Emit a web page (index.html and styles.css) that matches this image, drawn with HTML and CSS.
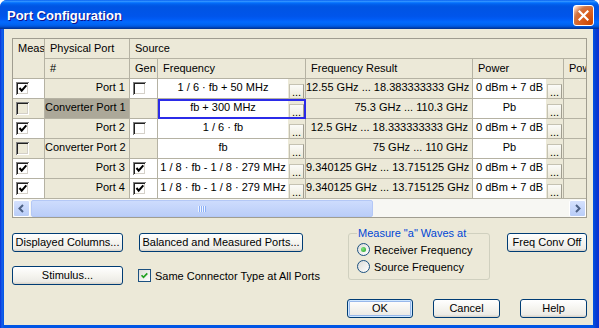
FILE: index.html
```html
<!DOCTYPE html>
<html>
<head>
	<meta charset="utf-8">
	<title>Port Configuration</title>
	<link rel="stylesheet" href="styles.css">
</head>
<body>
	<div class="window">
		<div class="titlebar">
			<span class="title">Port Configuration</span>
			<span class="close">
				<svg width="11" height="11" viewBox="0 0 11 11"><path d="M1.5 1.5l8 8M9.5 1.5l-8 8" stroke="#fff" stroke-width="2.2" stroke-linecap="square"/></svg>
			</span>
		</div>
		<div class="client">
			<div class="grid">
				<div class="sheet">
					<div class="hd meas">Meas</div>
					<div class="hd">Physical Port</div>
					<div class="hd source">Source</div>
					<div class="hd">#</div>
					<div class="hd">Gen</div>
					<div class="hd">Frequency</div>
					<div class="hd">Frequency Result</div>
					<div class="hd">Power</div>
					<div class="hd last">Pow</div>

					<div class="cell pick"><span class="cb"><svg viewBox="0 0 13 13"><path d="M3.5 6l2.2 2.6 4.6-5.2"/></svg></span></div>
					<div class="cell port">Port 1</div>
					<div class="cell pick"><span class="cb"></span></div>
					<div class="cell edit"><span class="val">1 / 6 · fb + 50 MHz</span><span class="more"><span class="dots">...</span></span></div>
					<div class="cell result">12.55 GHz ... 18.383333333 GHz</div>
					<div class="cell edit"><span class="val">0 dBm + 7 dB</span><span class="more"><span class="dots">...</span></span></div>
					<div class="cell blank last"></div>

					<div class="cell pick off"><span class="cb"></span></div>
					<div class="cell port sel">Converter Port 1</div>
					<div class="cell blank"></div>
					<div class="cell edit focus"><span class="val">fb + 300 MHz</span><span class="more"><span class="dots">...</span></span></div>
					<div class="cell result">75.3 GHz ... 110.3 GHz</div>
					<div class="cell edit"><span class="val">Pb</span><span class="more"><span class="dots">...</span></span></div>
					<div class="cell blank last"></div>

					<div class="cell pick"><span class="cb"><svg viewBox="0 0 13 13"><path d="M3.5 6l2.2 2.6 4.6-5.2"/></svg></span></div>
					<div class="cell port">Port 2</div>
					<div class="cell pick"><span class="cb"></span></div>
					<div class="cell edit"><span class="val">1 / 6 · fb</span><span class="more"><span class="dots">...</span></span></div>
					<div class="cell result">12.5 GHz ... 18.333333333 GHz</div>
					<div class="cell edit"><span class="val">0 dBm + 7 dB</span><span class="more"><span class="dots">...</span></span></div>
					<div class="cell blank last"></div>

					<div class="cell pick off"><span class="cb"></span></div>
					<div class="cell port">Converter Port 2</div>
					<div class="cell blank"></div>
					<div class="cell edit"><span class="val">fb</span><span class="more"><span class="dots">...</span></span></div>
					<div class="cell result">75 GHz ... 110 GHz</div>
					<div class="cell edit"><span class="val">Pb</span><span class="more"><span class="dots">...</span></span></div>
					<div class="cell blank last"></div>

					<div class="cell pick"><span class="cb"><svg viewBox="0 0 13 13"><path d="M3.5 6l2.2 2.6 4.6-5.2"/></svg></span></div>
					<div class="cell port">Port 3</div>
					<div class="cell pick"><span class="cb"><svg viewBox="0 0 13 13"><path d="M3.5 6l2.2 2.6 4.6-5.2"/></svg></span></div>
					<div class="cell edit"><span class="val">1 / 8 · fb - 1 / 8 · 279 MHz</span><span class="more"><span class="dots">...</span></span></div>
					<div class="cell result">9.340125 GHz ... 13.715125 GHz</div>
					<div class="cell edit"><span class="val">0 dBm + 7 dB</span><span class="more"><span class="dots">...</span></span></div>
					<div class="cell blank last"></div>

					<div class="cell pick"><span class="cb"><svg viewBox="0 0 13 13"><path d="M3.5 6l2.2 2.6 4.6-5.2"/></svg></span></div>
					<div class="cell port">Port 4</div>
					<div class="cell pick"><span class="cb"><svg viewBox="0 0 13 13"><path d="M3.5 6l2.2 2.6 4.6-5.2"/></svg></span></div>
					<div class="cell edit"><span class="val">1 / 8 · fb - 1 / 8 · 279 MHz</span><span class="more"><span class="dots">...</span></span></div>
					<div class="cell result">9.340125 GHz ... 13.715125 GHz</div>
					<div class="cell edit"><span class="val">0 dBm + 7 dB</span><span class="more"><span class="dots">...</span></span></div>
					<div class="cell blank last"></div>
				</div>
				<div class="hscroll">
					<span class="sb-btn"><svg width="9" height="9" viewBox="0 0 9 9"><path d="M6 1L2.5 4.5 6 8" fill="none" stroke="#4D6185" stroke-width="2"/></svg></span>
					<span class="sb-track"><span class="sb-thumb"><span class="grip"></span></span></span>
					<span class="sb-btn"><svg width="9" height="9" viewBox="0 0 9 9"><path d="M3 1l3.5 3.5L3 8" fill="none" stroke="#4D6185" stroke-width="2"/></svg></span>
				</div>
			</div>

			<div class="controls">
				<div class="col-left">
					<button class="btn wide">Displayed Columns...</button>
					<button class="btn wide">Stimulus...</button>
				</div>
				<div class="col-mid">
					<button class="btn balanced">Balanced and Measured Ports...</button>
					<label class="check">
						<span class="xp-cb"><svg viewBox="0 0 13 13"><path d="M3 6.2l2.3 2.5 4.5-4.8"/></svg></span>
						Same Connector Type at All Ports
					</label>
				</div>
				<fieldset class="group">
					<legend>Measure "a" Waves at</legend>
					<label class="radio"><span class="xp-rb on"></span>Receiver Frequency</label>
					<label class="radio"><span class="xp-rb"></span>Source Frequency</label>
				</fieldset>
				<div class="col-right">
					<button class="btn conv">Freq Conv Off</button>
				</div>
			</div>

			<div class="footer">
				<button class="btn ok">OK</button>
				<button class="btn action">Cancel</button>
				<button class="btn action">Help</button>
			</div>
		</div>
	</div>
</body>
</html>
```

FILE: styles.css
```css
* {
	margin: 0;
	padding: 0;
	box-sizing: border-box;
}
body {
	font-family: 'Liberation Sans', Arial, sans-serif;
	font-size: 11px;
	background-color: #fff;
}
.window {
	display: flex;
	flex-direction: column;
	width: 599px;
	height: 328px;
	background: linear-gradient(90deg, #0831d9 0, #1660ea 2px, #0055e5 4px, #0055e5 593px, #0a3dd0 596px, #0831d9 100%);
	border-radius: 7px 7px 0 0;
	overflow: hidden;
}
.titlebar {
	display: flex;
	justify-content: space-between;
	align-items: flex-start;
	flex: none;
	height: 29px;
	padding: 0 5px 0 7px;
	background: linear-gradient(180deg, #0058ee 0%, #3593ff 4%, #288eff 6%, #127dff 8%, #036ffc 10%, #0262ee 14%, #0057e5 20%, #0054e3 24%, #0055eb 56%, #005bf5 66%, #026afe 76%, #0062ef 86%, #0052d6 92%, #0040ab 96%, #003092 100%);
}
.title {
	margin-top: 8px;
	color: #fff;
	font-size: 13px;
	font-weight: 700;
	line-height: 15px;
	text-shadow: 1px 1px #0f1089;
}
.close {
	display: flex;
	align-items: center;
	justify-content: center;
	width: 21px;
	height: 21px;
	margin-top: 5px;
	border: 1px solid #fff;
	border-radius: 3px;
	background: radial-gradient(circle at 90% 90%, #cc4600 0%, #dc6527 55%, #cd7546 70%, #ffccb2 90%, #fff 100%);
}
.client {
	display: flex;
	flex-direction: column;
	flex: 1;
	margin: 0 6px 3px 4px;
	padding: 9px 6px 7px 8px;
	background-color: #ece9d8;
}

/* grid */
.grid {
	width: 575px;
	border: 1px solid #a09d90;
	background-color: #ece9d8;
}
.sheet {
	display: grid;
	grid-template-columns: 32px 85px 28px 148px 167px 91px 1fr;
	grid-auto-rows: 20px;
}
.hd,
.cell {
	overflow: hidden;
	white-space: nowrap;
	line-height: 14px;
	border-right: 1px solid #b5b2a3;
	border-bottom: 1px solid #b5b2a3;
}
.hd {
	padding: 2px 5px 0;
	background-color: #ece9d8;
}
.hd.meas {
	grid-row: span 2;
}
.hd.source {
	grid-column: 3 / -1;
	border-right: 0;
}
.last {
	border-right: 0;
}
.cell {
	padding-top: 1px;
	background-color: #fff;
}
.pick {
	padding: 3px 0 0 3px;
}
.pick.off,
.blank,
.port,
.result {
	background-color: #ece9d8;
}
.port,
.result {
	text-align: right;
	padding-right: 4px;
}
.port.sel {
	background-color: #aca899;
}
.cb {
	display: block;
	width: 13px;
	height: 13px;
	background-color: #fff;
	box-shadow: inset 1px 1px #808080, inset -1px -1px #fff, inset 2px 2px #202020, inset -2px -2px #d4d0c8;
}
.off .cb {
	background-color: #ece9d8;
}
.cb svg {
	display: block;
	width: 13px;
	height: 13px;
	fill: none;
	stroke: #000;
	stroke-width: 2;
}
.edit {
	display: flex;
	padding-top: 0;
	background-color: #ece9d8;
}
.edit .val {
	flex: 1;
	padding-top: 1px;
	text-align: center;
	background-color: #fff;
}
.more {
	display: flex;
	align-items: flex-end;
	flex: none;
	width: 17px;
	padding: 0 1px;
}
.dots {
	width: 15px;
	height: 14px;
	line-height: 14px;
	text-align: center;
	background: linear-gradient(180deg, #fbfbf8, #ece9d8);
	border: 1px solid #c5c2b2;
	border-right-color: #a09d90;
	border-bottom: 0;
}
.edit.focus {
	outline: 2px solid #2b2be8;
	outline-offset: -2px;
}

/* scrollbar */
.hscroll {
	display: flex;
	height: 18px;
	background-color: #f7f7f3;
}
.sb-btn {
	display: flex;
	align-items: center;
	justify-content: center;
	flex: none;
	width: 17px;
	height: 17px;
	margin-top: 1px;
	border: 1px solid #fff;
	border-radius: 2px;
	background: linear-gradient(180deg, #d5e1fd, #b9cdf8);
}
.sb-track {
	flex: 1;
	padding-top: 1px;
}
.sb-thumb {
	display: flex;
	align-items: center;
	justify-content: center;
	width: 342px;
	height: 17px;
	margin-left: 1px;
	border: 1px solid #b4c8f6;
	border-radius: 2px;
	background: linear-gradient(180deg, #cddcfd, #bacdf8);
}
.grip {
	width: 8px;
	height: 6px;
	background: repeating-linear-gradient(90deg, #eef4fe 0, #eef4fe 1px, #8cb0f8 1px, #8cb0f8 2px);
}

/* controls */
.controls {
	display: flex;
	margin-top: 9px;
}
.btn {
	display: block;
	height: 19px;
	padding: 0;
	font-family: inherit;
	font-size: 11px;
	line-height: 13px;
	color: #000;
	text-align: center;
	border: 1px solid #003c74;
	border-radius: 3px;
	background: linear-gradient(180deg, #fff 0%, #f5f4ef 50%, #ecebe6 86%, #d6d0c5 100%);
}
.col-left {
	display: flex;
	flex-direction: column;
	gap: 14px;
	padding-top: 6px;
}
.wide {
	width: 111px;
}
.col-mid {
	flex: none;
	width: 164px;
	margin-left: 16px;
	padding-top: 6px;
}
.balanced {
	width: 164px;
}
.check {
	display: flex;
	align-items: center;
	gap: 4px;
	margin-top: 17px;
	margin-left: -1px;
	white-space: nowrap;
}
.xp-cb {
	flex: none;
	width: 13px;
	height: 13px;
	border: 1px solid #1c5180;
	background: linear-gradient(135deg, #dcdcd7, #fff);
}
.xp-cb svg {
	display: block;
	width: 11px;
	height: 11px;
	fill: none;
	stroke: #21a121;
	stroke-width: 2;
}
.group {
	flex: none;
	width: 142px;
	height: 53px;
	margin-left: 45px;
	padding: 0 0 0 8px;
	border: 1px solid #d0d0bf;
	border-radius: 3px;
}
.group legend {
	padding: 0 1px;
	color: #0046d5;
	line-height: 13px;
}
.radio {
	display: flex;
	align-items: center;
	gap: 4px;
	height: 13px;
	margin-top: 3px;
	white-space: nowrap;
}
.radio + .radio {
	margin-top: 4px;
}
.xp-rb {
	display: flex;
	align-items: center;
	justify-content: center;
	flex: none;
	width: 13px;
	height: 13px;
	border: 1px solid #1c5180;
	border-radius: 50%;
	background: linear-gradient(135deg, #dcdcd7, #fff);
}
.xp-rb.on::after {
	content: "";
	width: 5px;
	height: 5px;
	border-radius: 50%;
	background: radial-gradient(circle at 35% 35%, #7fe37f, #21a121);
}
.col-right {
	margin-left: auto;
	padding-top: 6px;
}
.conv {
	width: 80px;
}
.footer {
	display: flex;
	justify-content: flex-end;
	gap: 20px;
	margin-top: auto;
}
.ok {
	width: 66px;
	box-shadow: inset 0 0 0 1px #cee7ff, inset 0 0 0 2px #98b8ea;
}
.action {
	width: 67px;
}
```
